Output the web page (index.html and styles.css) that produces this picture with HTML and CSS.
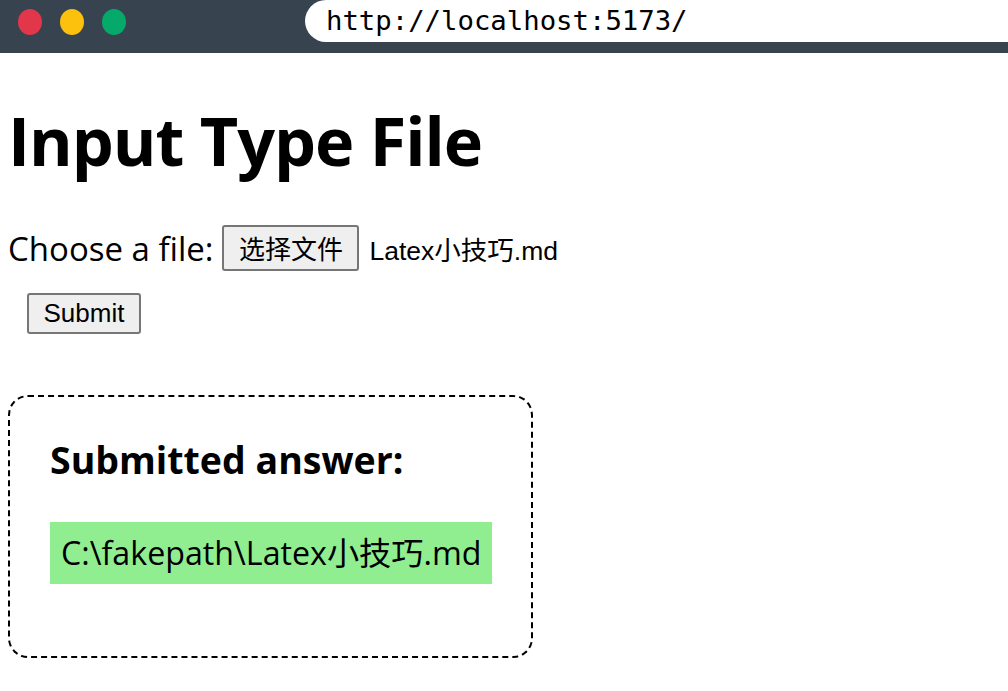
FILE: index.html
```html
<!DOCTYPE html>
<html>
<head>
<meta charset="utf-8">
<link rel="stylesheet" href="styles.css">
</head>
<body>
<div class="chrome">
  <div class="dots">
    <span class="dot red"></span>
    <span class="dot yellow"></span>
    <span class="dot green"></span>
  </div>
  <div class="url">http://localhost:5173/</div>
</div>
<main class="page">
  <h1 class="title">Input Type File</h1>
  <form class="form">
    <div class="row">
      <span class="label">Choose a file:</span>
      <span class="btn btn-file">选择文件</span>
      <span class="filename">Latex小技巧.md</span>
    </div>
    <div class="row2">
      <span class="btn btn-submit">Submit</span>
    </div>
  </form>
  <section class="result">
    <h2 class="result-title">Submitted answer:</h2>
    <div class="answer">C:\fakepath\Latex小技巧.md</div>
  </section>
</main>
</body>
</html>
```
FILE: styles.css
```css
html, body { margin: 0; padding: 0; background: #fff; }
body { font-family: "Open Sans", "Noto Sans CJK SC", sans-serif; color: #000; }
.chrome { height: 53px; background: #37444f; display: flex; align-items: flex-start; }
.dots { display: flex; gap: 18px; padding: 9px 0 0 18px; width: 287px; }
.dot { width: 24px; height: 26px; border-radius: 50%; display: block; }
.red { background: #e2364a; }
.yellow { background: #fcc10c; }
.green { background: #05a96a; }
.url { flex: 1; height: 42px; background: #fff; border-radius: 22px 0 0 22px; box-sizing: border-box; padding-left: 21px; font-family: "DejaVu Sans Mono", monospace; font-size: 27.3px; line-height: 42px; color: #000; }
.page { padding: 0 8px; }
.title { font-size: 66.5px; font-weight: 700; margin: 44px 0 0; line-height: 1.3; letter-spacing: -1px; }
.form { margin-top: 40px; }
.row { display: flex; align-items: center; height: 50px; }
.label { font-size: 33px; margin-right: 9px; }
.btn { display: inline-block; background: #efefef; border: 2px solid #767676; border-radius: 3px; box-sizing: border-box; font-family: "Liberation Sans", "Noto Sans CJK SC", sans-serif; color: #000; text-align: center; }
.btn-file { width: 137px; height: 46px; font-size: 26px; line-height: 46px; }
.filename { font-family: "Liberation Sans", "Noto Sans CJK SC", sans-serif; font-size: 26.5px; margin-left: 10px; }
.row2 { margin-top: 20px; padding-left: 19px; }
.btn-submit { width: 114px; height: 41px; font-size: 26px; line-height: 37px; }
.result { margin-top: 61px; width: 525px; box-sizing: border-box; border: 2px dashed #000; border-radius: 20px; padding: 40px 40px 72px; }
.result-title { font-size: 37.5px; font-weight: 700; margin: 0 0 40px; line-height: 1.2; }
.answer { display: inline-block; white-space: nowrap; background: #90ee90; font-size: 32.2px; padding: 9px 11px; line-height: 44px; }
```
